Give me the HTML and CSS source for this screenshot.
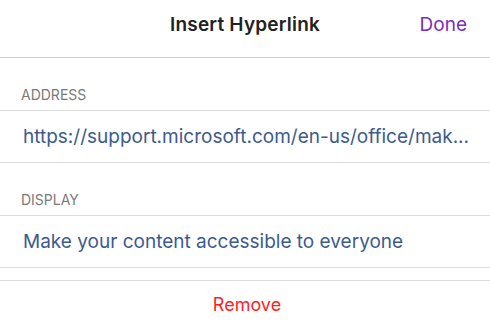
FILE: index.html
```html
<!DOCTYPE html>
<html lang="en">
<head>
    <meta charset="UTF-8">
    <title>Insert Hyperlink</title>
    <link rel="stylesheet" href="styles.css">
</head>
<body>
    <div class="sheet">
        <div class="nav-bar">
            <span class="nav-title">Insert Hyperlink</span>
            <a href="#" class="done-btn">Done</a>
        </div>

        <div class="section-caption">ADDRESS</div>
        <div class="field-row">
            <span class="field-value">https://support.microsoft.com/en-us/office/mak...</span>
        </div>

        <div class="section-caption">DISPLAY</div>
        <div class="field-row">
            <span class="field-value">Make your content accessible to everyone</span>
        </div>

        <div class="spacer"></div>
        <div class="action-row">
            <a href="#" class="remove-btn">Remove</a>
        </div>
    </div>
</body>
</html>
```

FILE: styles.css
```css
:root {
    --line-color: #dcdcdc;
    --title-color: #222;
    --accent-color: #7f2bbd;
    --value-color: #3d5a8e;
    --caption-color: #7a7a7a;
    --danger-color: #ff1d25;
}

body {
    margin: 0;
    background: white;
    font-family: Inter, 'Liberation Sans', Arial, sans-serif;
}

.sheet {
    width: 490px;
    height: 327px;
    overflow: hidden;
}

.nav-bar {
    position: relative;
    height: 57px;
    display: flex;
    align-items: center;
    justify-content: center;
    border-bottom: 1px solid #cfcfcf;
}

.nav-title {
    font-size: 19px;
    font-weight: 600;
    color: var(--title-color);
    margin-top: -8px;
    letter-spacing: 0.2px;
}

.done-btn {
    position: absolute;
    right: 23px;
    top: 13px;
    font-size: 19px;
    color: var(--accent-color);
    text-decoration: none;
}

.section-caption {
    height: 53px;
    box-sizing: border-box;
    padding: 28px 0 0 21px;
    font-size: 14px;
    color: var(--caption-color);
    border-bottom: 1px solid var(--line-color);
}

.field-row {
    height: 52px;
    box-sizing: border-box;
    display: flex;
    align-items: center;
    padding-left: 23px;
    border-bottom: 1px solid var(--line-color);
}

.field-value {
    font-size: 19px;
    color: var(--value-color);
    white-space: nowrap;
}

.spacer {
    height: 12px;
    border-bottom: 1px solid var(--line-color);
}

.action-row {
    height: 46px;
    display: flex;
    align-items: center;
    justify-content: center;
}

.remove-btn {
    font-size: 18px;
    color: var(--danger-color);
    text-decoration: none;
    padding-left: 4px;
}
```
